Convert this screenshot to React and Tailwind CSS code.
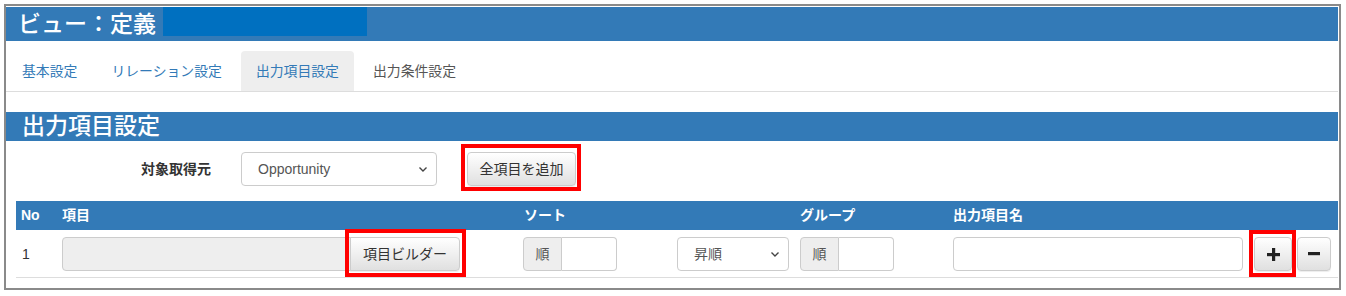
import React from "react";

const font = { fontFamily: '"Liberation Sans", "Noto Sans CJK JP", sans-serif' };

function Chevron() {
  return (
    <svg width="10" height="7" viewBox="0 0 10 7" className="shrink-0">
      <polyline points="1.5,1.5 5,5 8.5,1.5" fill="none" stroke="#444" strokeWidth="1.4" />
    </svg>
  );
}

function RedBox({ className }) {
  return <div className={"pointer-events-none absolute border-4 border-[#ff0000] " + className} />;
}

const btn =
  "flex items-center justify-center h-[34px] border border-[#ccc] bg-linear-to-b from-white to-[#e0e0e0] text-[14px] text-[#333] shadow-[0_1px_1px_rgba(0,0,0,0.075)]";

function AddonInput() {
  return (
    <div className="flex h-[34px] w-[94px]">
      <div className="flex w-[39px] items-center justify-center rounded-l-[4px] border border-[#ccc] bg-[#eee] text-[14px] text-[#555]">
        順
      </div>
      <div className="flex-1 rounded-r-[4px] border border-l-0 border-[#ccc] bg-white" />
    </div>
  );
}

export default function App() {
  const tabs = [
    { t: "基本設定", c: "text-[#337ab7]" },
    { t: "リレーション設定", c: "text-[#337ab7]" },
    { t: "出力項目設定", c: "text-[#337ab7] bg-[#eee]" },
    { t: "出力条件設定", c: "text-[#555]" },
  ];
  return (
    <div style={font} className="bg-white pt-[4px]">
      <div className="ml-[4px] h-[286px] w-[1337px] border-2 border-[#8a8a8a] pt-[1px] pr-[1px]">
        {/* Title bar */}
        <div className="flex h-[34px] items-start bg-[#337ab7]">
          <div className="flex h-[34px] items-center pl-[12px] text-[23px] font-medium leading-none text-white">
            ビュー：定義
          </div>
          <div className="ml-[7px] h-[29px] w-[204px] bg-[#0070c0]" />
        </div>

        {/* Tabs */}
        <div className="mt-[10px] flex gap-[4px] border-b border-[#ddd] pl-[1px]">
          {tabs.map((x) => (
            <div key={x.t} className={"h-[40px] rounded-t-[4px] px-[15px] py-[10px] text-[13.85px] leading-[20px] " + x.c}>
              {x.t}
            </div>
          ))}
        </div>

        {/* Section header */}
        <div className="mt-[20px] flex h-[29px] items-center bg-[#337ab7] pl-[16px] text-[23px] font-medium leading-none text-white">
          出力項目設定
        </div>

        {/* Form row */}
        <div className="mt-[11px] flex h-[34px] items-center">
          <div className="w-[205px] text-right text-[14px] font-bold text-[#333]">対象取得元</div>
          <div className="ml-[30px] flex h-[34px] w-[196px] items-center justify-between rounded-[4px] border border-[#ccc] bg-white pl-[16px] pr-[8px] text-[14px] text-[#555]">
            <span>Opportunity</span>
            <Chevron />
          </div>
          <div className="relative ml-[30px]">
            <div className={btn + " w-[109px] rounded-[4px]"}>全項目を追加</div>
            <RedBox className="-left-[6px] -right-[5px] -top-[8px] -bottom-[5px]" />
          </div>
        </div>

        {/* Table */}
        <div className="ml-[10px] mt-[15px]">
          <div className="grid h-[29px] grid-cols-[41px_462px_276px_153px_301px_1fr] items-center bg-[#337ab7] text-[14px] font-bold text-white">
            <div className="pl-[5px]">No</div>
            <div className="pl-[5px]">項目</div>
            <div className="pl-[5px]">ソート</div>
            <div className="pl-[5px]">グループ</div>
            <div className="pl-[5px]">出力項目名</div>
            <div />
          </div>
          <div className="grid grid-cols-[41px_462px_276px_153px_301px_1fr] items-center border-b border-[#ddd] pt-[7px] pb-[6px] text-[14px] text-[#333]">
            <div className="pl-[6px]">1</div>
            <div className="flex pl-[5px]">
              <div className="h-[34px] w-[289px] rounded-l-[4px] border border-[#ccc] bg-[#eee]" />
              <div className="relative">
                <div className={btn + " w-[110px] rounded-r-[4px] -ml-px"}>項目ビルダー</div>
                <RedBox className="-left-[6px] -right-[6px] -top-[8px] -bottom-[6px]" />
              </div>
            </div>
            <div className="flex items-center pl-[4px]">
              <AddonInput />
              <div className="ml-[60px] flex h-[34px] w-[112px] items-center justify-between rounded-[4px] border border-[#ccc] bg-white pl-[16px] pr-[8px] text-[14px] text-[#555]">
                <span>昇順</span>
                <Chevron />
              </div>
            </div>
            <div className="pl-[5px]">
              <AddonInput />
            </div>
            <div className="pl-[5px]">
              <div className="h-[34px] w-[290px] rounded-[4px] border border-[#ccc] bg-white" />
            </div>
            <div className="flex items-center pl-[5px]">
              <div className="relative">
                <div className={btn + " w-[38px] rounded-[4px]"}>
                  <svg width="13" height="13" viewBox="0 0 13 13">
                    <rect x="5" y="0" width="3.2" height="13" fill="#222" />
                    <rect x="0" y="5" width="13" height="3.2" fill="#222" />
                  </svg>
                </div>
                <RedBox className="-left-[5px] -right-[4px] -top-[7px] -bottom-[6px]" />
              </div>
              <div className={btn + " ml-[5px] w-[34px] rounded-[4px]"}>
                <svg width="12" height="4" viewBox="0 0 12 4">
                  <rect x="0" y="0" width="12" height="3.2" fill="#222" />
                </svg>
              </div>
            </div>
          </div>
        </div>
      </div>
    </div>
  );
}
